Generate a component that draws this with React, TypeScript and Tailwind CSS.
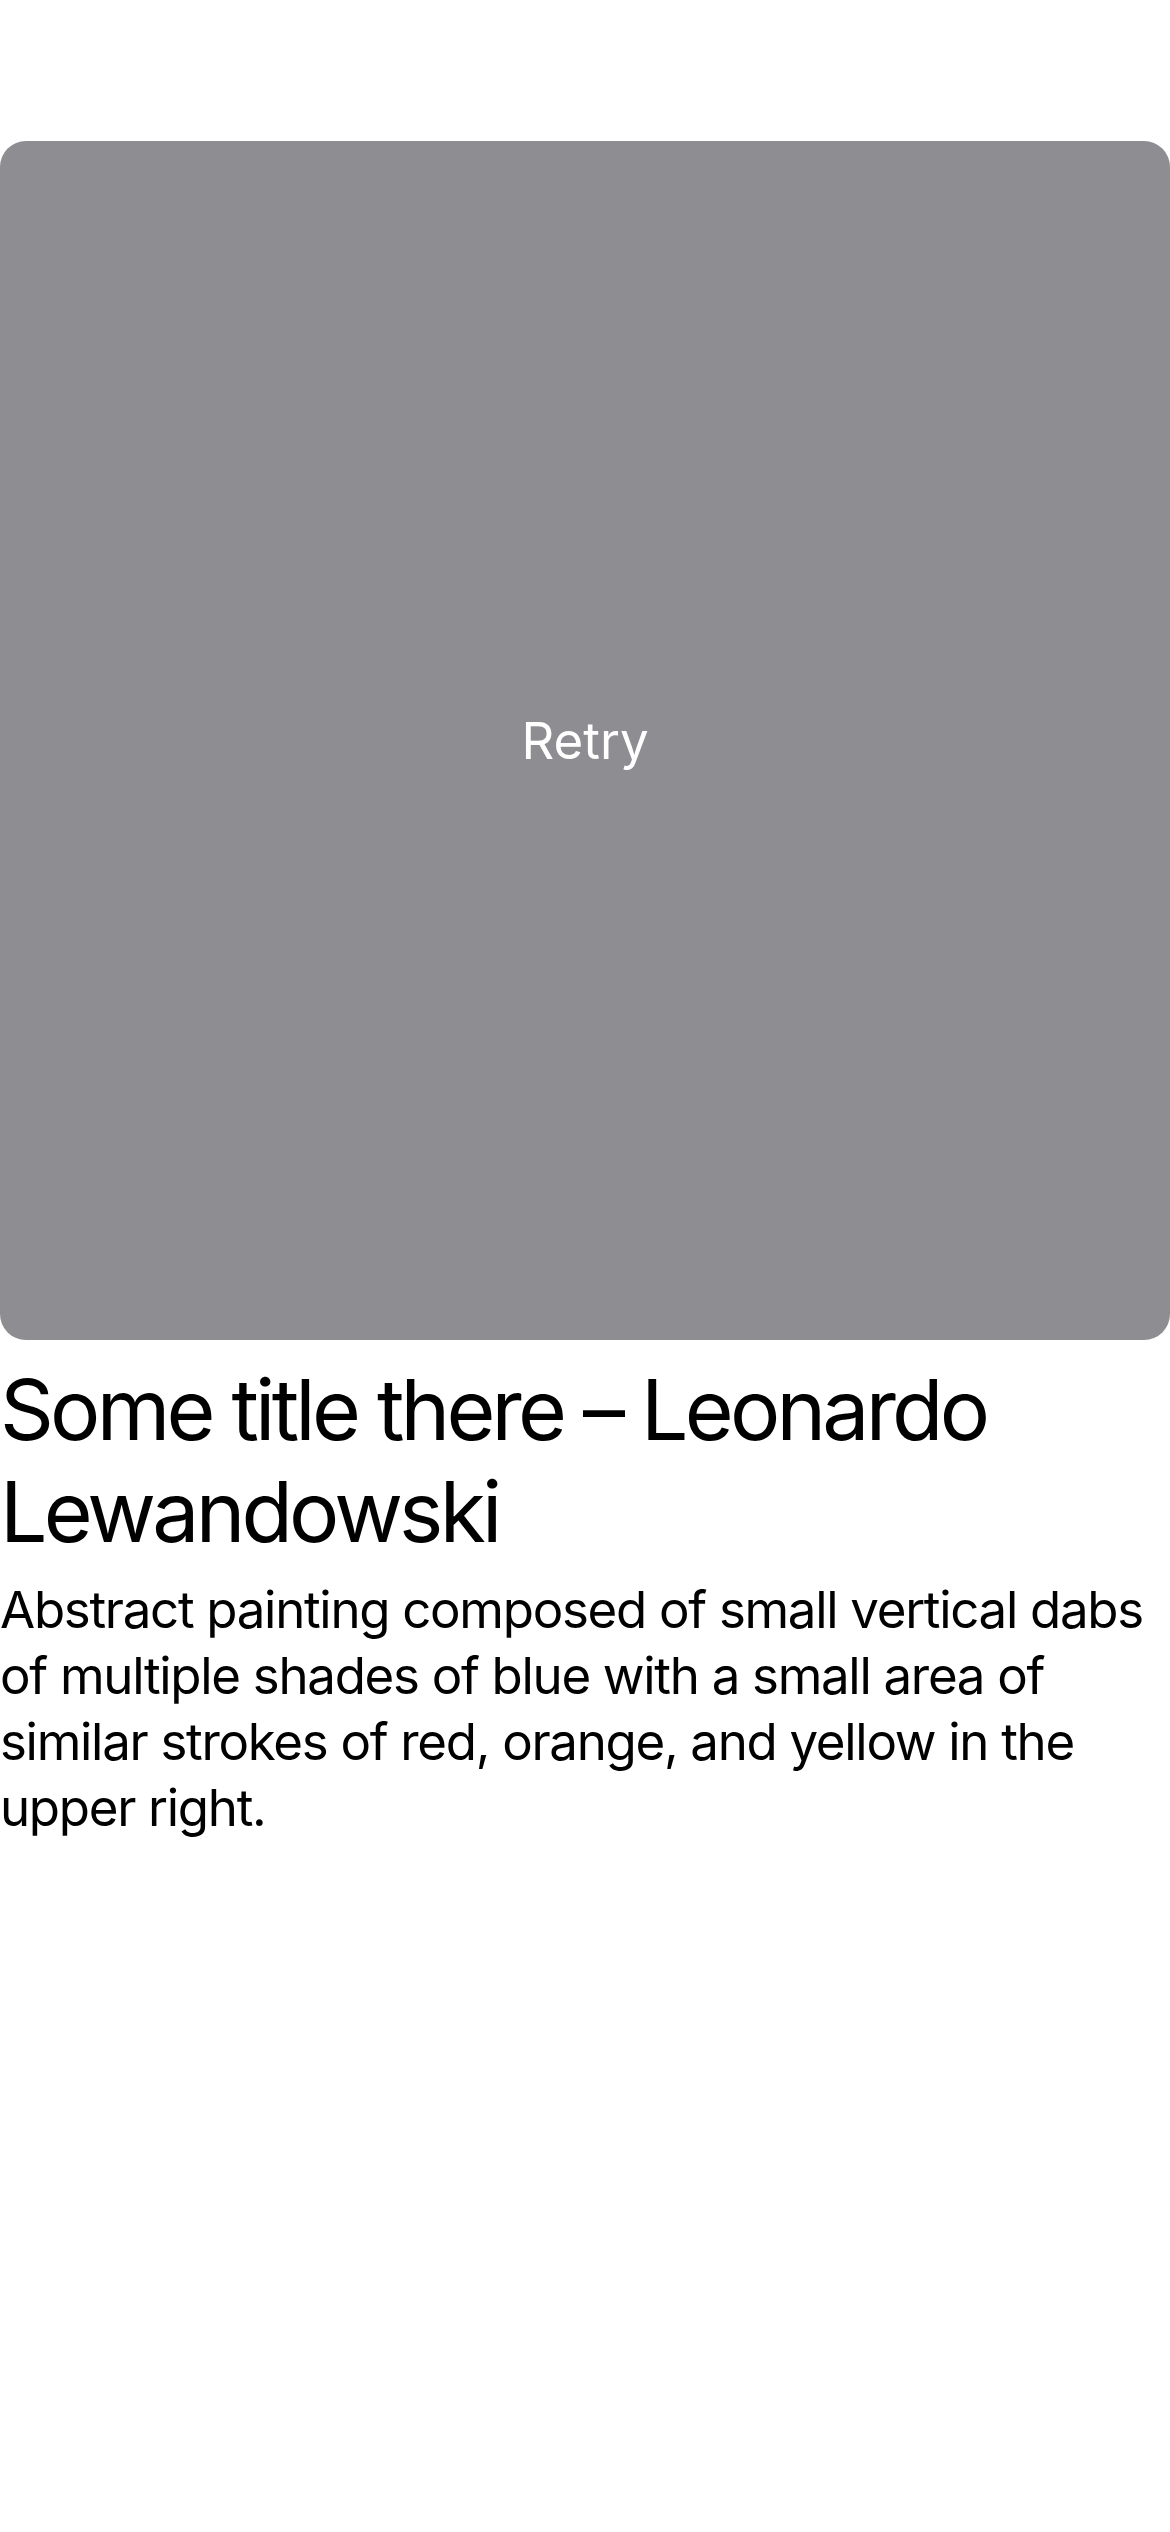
import React from 'react';

const App: React.FC = () => {
  return (
    <div className="min-h-[2532px] w-[1170px] bg-white font-['Inter','Liberation_Sans',sans-serif] text-black">
      <div className="pt-[141px]">
        <button
          type="button"
          className="flex h-[1199px] w-full items-center justify-center rounded-[26px] bg-[#8e8d92]"
        >
          <span className="text-[51px] leading-none text-white">Retry</span>
        </button>
      </div>
      <h1 className="mt-[19px] text-[84px] leading-[102px] font-normal tracking-[-3.8px]">
        Some title there – Leonardo Lewandowski
      </h1>
      <p className="mt-[14px] text-[51px] leading-[66px] tracking-[-1.3px]">
        Abstract painting composed of small vertical dabs of multiple shades of blue with a small area of
        similar strokes of red, orange, and yellow in the upper right.
      </p>
    </div>
  );
};

export default App;
